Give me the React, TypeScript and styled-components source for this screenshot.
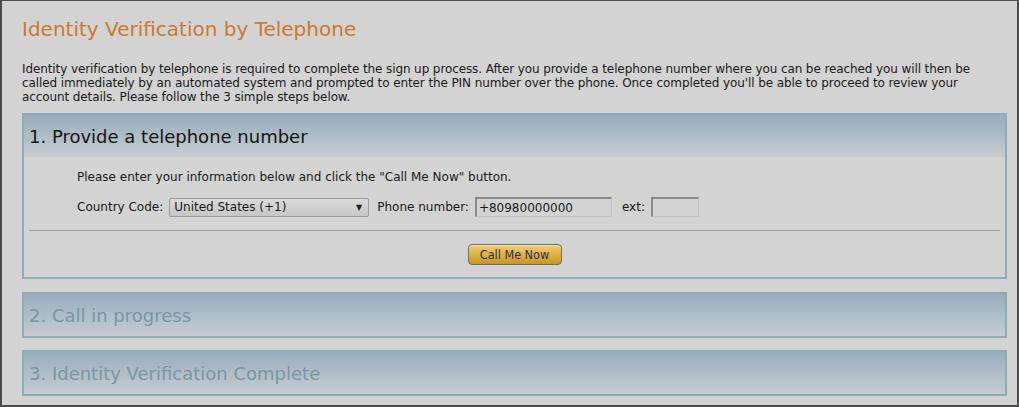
import React from "react";
import styled, { createGlobalStyle } from "styled-components";

const Global = createGlobalStyle`
  html, body { margin: 0; padding: 0; background: #d3d3d3; }
  * { box-sizing: border-box; }
`;

const Frame = styled.div`
  width: 1019px;
  height: 407px;
  border-style: solid;
  border-color: #4b4b4b;
  border-width: 1px 2px 2px 2px;
  background: #d3d3d3;
  padding: 14px 10px 0 20px;
  font-family: "DejaVu Sans", Verdana, sans-serif;
  color: #1a1a1a;
  overflow: hidden;
`;

const Title = styled.h1`
  margin: 0;
  font-size: 20px;
  font-weight: normal;
  color: #cc7a2c;
  line-height: 28px;
`;

const Intro = styled.p`
  margin: 19px 0 9px 0;
  font-size: 12px;
  line-height: 14px;
  letter-spacing: -0.1px;
`;

const Panel = styled.section<{ $active?: boolean }>`
  border: 2px solid #8eabb8;
  margin-bottom: ${(p) => (p.$active ? "13px" : "12px")};
`;

const PanelHeader = styled.div<{ $dim?: boolean }>`
  height: 42px;
  display: flex;
  align-items: center;
  padding-left: 5px;
  background: linear-gradient(to bottom, #97aebc, #c7ccd1);
  font-size: 18px;
  color: ${(p) => (p.$dim ? "#7b95a2" : "#141414")};
`;

const PanelBody = styled.div`
  padding: 13px 5px 12px 5px;
  font-size: 12px;
  display: flex;
  flex-direction: column;
`;

const Form = styled.div`
  padding-left: 48px;
  display: flex;
  flex-direction: column;
  gap: 14px;
`;

const Row = styled.div`
  display: flex;
  align-items: center;
  height: 18px;
`;

const Label = styled.span<{ $ml?: number }>`
  margin-left: ${(p) => p.$ml ?? 0}px;
  margin-right: 6px;
  white-space: nowrap;
`;

const Select = styled.div`
  width: 200px;
  height: 19px;
  flex: none;
  border: 1px solid #9a9a9a;
  border-radius: 2px;
  background: linear-gradient(to bottom, #dadada, #c6c6c6);
  display: flex;
  align-items: center;
  justify-content: space-between;
  padding: 0 4px 0 4px;
  font-size: 12px;
`;

const Arrow = styled.span`
  font-size: 8px;
  color: #222;
  margin-right: 2px;
`;

const Input = styled.div<{ $w: number }>`
  width: ${(p) => p.$w}px;
  flex: none;
  height: 20px;
  border-style: solid;
  border-width: 2px 1px 1px 2px;
  border-color: #8a8a8a #c4c4c4 #c4c4c4 #8a8a8a;
  background: #d3d3d3;
  display: flex;
  align-items: center;
  padding-left: 2px;
  font-size: 12px;
`;

const Divider = styled.hr`
  border: none;
  border-top: 1px solid #9c9c9c;
  margin: 14px 0 13px 0;
  height: 0;
`;

const ButtonRow = styled.div`
  display: flex;
  justify-content: center;
`;

const Button = styled.button`
  width: 94px;
  height: 21px;
  border: 1px solid #6b6b7e;
  border-radius: 4px;
  background: linear-gradient(to bottom, #f2d070 0%, #e2b23e 50%, #c89520 100%);
  color: #2a2a62;
  font-family: "DejaVu Sans Condensed", "DejaVu Sans", sans-serif;
  font-size: 12.5px;
  padding: 0;
  box-shadow: inset 0 1px 0 rgba(255,255,255,0.4);
`;

export default function App() {
  return (
    <>
      <Global />
      <Frame>
        <Title>Identity Verification by Telephone</Title>
        <Intro>
          Identity verification by telephone is required to complete the sign up process. After you provide a telephone number where you can be reached you will then be called immediately by an automated system and prompted to enter the PIN number over the phone. Once completed you'll be able to proceed to review your account details. Please follow the 3 simple steps below.
        </Intro>
        <Panel $active>
          <PanelHeader>1. Provide a telephone number</PanelHeader>
          <PanelBody>
            <Form>
              <div>Please enter your information below and click the "Call Me Now" button.</div>
              <Row>
                <Label>Country Code:</Label>
                <Select>
                  <span>United States (+1)</span>
                  <Arrow>▼</Arrow>
                </Select>
                <Label $ml={8}>Phone number:</Label>
                <Input $w={137}>+80980000000</Input>
                <Label $ml={10}>ext:</Label>
                <Input $w={48} />
              </Row>
            </Form>
            <Divider />
            <ButtonRow>
              <Button>Call Me Now</Button>
            </ButtonRow>
          </PanelBody>
        </Panel>
        <Panel>
          <PanelHeader $dim>2. Call in progress</PanelHeader>
        </Panel>
        <Panel>
          <PanelHeader $dim>3. Identity Verification Complete</PanelHeader>
        </Panel>
      </Frame>
    </>
  );
}
